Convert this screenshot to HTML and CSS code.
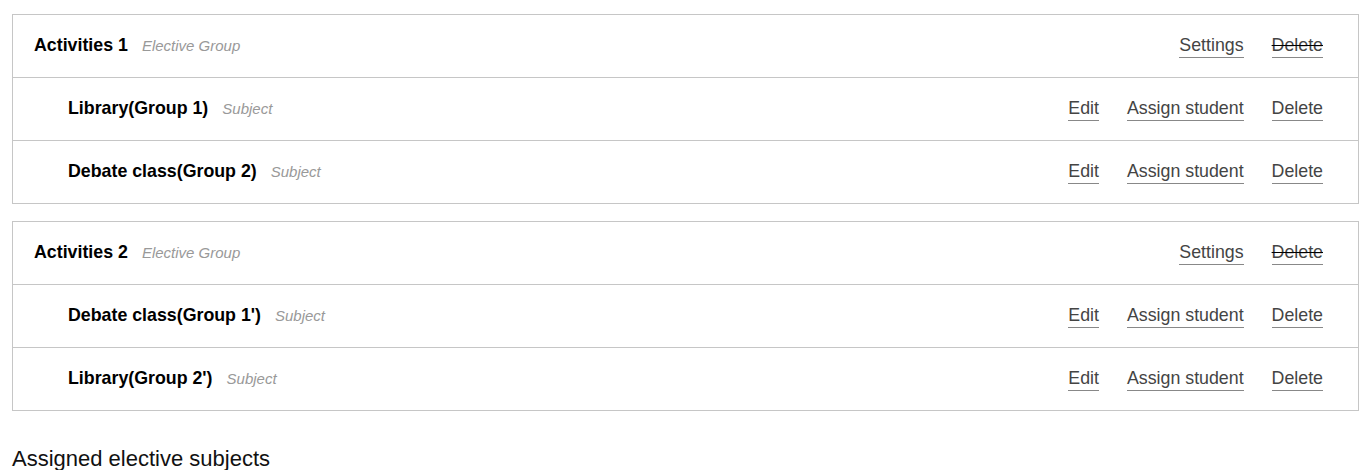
FILE: index.html
```html
<!DOCTYPE html>
<html lang="en">
<head>
<meta charset="utf-8">
<title>Elective groups</title>
<link rel="stylesheet" href="styles.css">
</head>
<body>
<div class="page">
  <section class="group">
    <div class="row row-head">
      <div class="name"><span class="title">Activities 1</span><span class="kind">Elective Group</span></div>
      <div class="actions"><a class="link">Settings</a><a class="link disabled">Delete</a></div>
    </div>
    <div class="row row-sub">
      <div class="name"><span class="title">Library(Group 1)</span><span class="kind">Subject</span></div>
      <div class="actions"><a class="link">Edit</a><a class="link">Assign student</a><a class="link">Delete</a></div>
    </div>
    <div class="row row-sub">
      <div class="name"><span class="title">Debate class(Group 2)</span><span class="kind">Subject</span></div>
      <div class="actions"><a class="link">Edit</a><a class="link">Assign student</a><a class="link">Delete</a></div>
    </div>
  </section>
  <section class="group">
    <div class="row row-head">
      <div class="name"><span class="title">Activities 2</span><span class="kind">Elective Group</span></div>
      <div class="actions"><a class="link">Settings</a><a class="link disabled">Delete</a></div>
    </div>
    <div class="row row-sub">
      <div class="name"><span class="title">Debate class(Group 1')</span><span class="kind">Subject</span></div>
      <div class="actions"><a class="link">Edit</a><a class="link">Assign student</a><a class="link">Delete</a></div>
    </div>
    <div class="row row-sub">
      <div class="name"><span class="title">Library(Group 2')</span><span class="kind">Subject</span></div>
      <div class="actions"><a class="link">Edit</a><a class="link">Assign student</a><a class="link">Delete</a></div>
    </div>
  </section>
  <h2 class="heading">Assigned elective subjects</h2>
</div>
</body>
</html>
```
FILE: styles.css
```css
html, body {
  margin: 0;
  padding: 0;
  background: #fff;
}
body {
  font-family: "Liberation Sans", Arial, sans-serif;
  color: #000;
}
.page {
  padding: 14px 13px 0 12px;
  display: flex;
  flex-direction: column;
  gap: 17px;
}
.group {
  border: 1px solid #c6c6c6;
}
.row {
  height: 62px;
  display: flex;
  align-items: center;
  justify-content: space-between;
  padding: 0 35px 0 21px;
}
.row + .row {
  border-top: 1px solid #c6c6c6;
}
.row-sub {
  padding-left: 55px;
}
.name {
  display: flex;
  align-items: baseline;
  padding-bottom: 1px;
}
.title {
  font-weight: bold;
  font-size: 17.8px;
}
.kind {
  margin-left: 14px;
  font-style: italic;
  font-size: 15px;
  color: #999;
}
.actions {
  display: flex;
  gap: 28px;
  padding-top: 1px;
}
.link {
  font-size: 17.8px;
  color: #444;
  border-bottom: 1px solid #888;
  line-height: 21px;
  padding-bottom: 1px;
  cursor: pointer;
}
.link.disabled {
  text-decoration: line-through;
  text-decoration-color: #000;
}
.heading {
  margin: 18px 0 0 0;
  font-size: 22px;
  font-weight: normal;
  color: #111;
}
```
